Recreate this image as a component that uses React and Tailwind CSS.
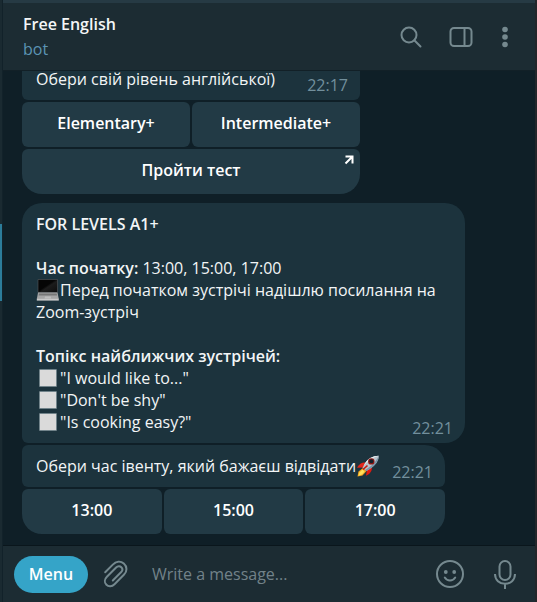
import React from "react";

function Laptop() {
  return (
    <svg viewBox="0 0 24 22" className="h-[22px] w-6 shrink-0" role="img" aria-label="laptop">
      <defs>
        <linearGradient id="screen" x1="0" y1="0" x2="1" y2="1">
          <stop offset="0.45" stopColor="#050505" />
          <stop offset="0.55" stopColor="#1c1c1c" />
          <stop offset="1" stopColor="#0c0c0c" />
        </linearGradient>
      </defs>
      <path d="M2 .5h19.500v13H2z" fill="url(#screen)" stroke="#55585a" strokeWidth=".6" />
      <path d="M2 13.500h19.500l1.300 6.500H.8z" fill="#a6a6a6" />
      <path d="M3 14.400h17.600l.5 2.200H2.600z" fill="#777777" />
      <path d="M9 17.600h5.800l.4 2H8.600z" fill="#bdbdbd" />
      <path d="M.8 19.800h22v1.800H.8z" fill="#c9c9c9" />
    </svg>
  );
}

function Rocket() {
  return (
    <svg viewBox="0 0 24 22" className="h-[22px] w-6 shrink-0" role="img" aria-label="rocket">
      <path d="M7 13 2.500 16.500 1.500 21.500l5-1L10.500 16z" fill="#f6a51f" />
      <path d="M6.500 14.500 3.400 17.500l-1 3.300L6 19.600l2.600-3z" fill="#ffe05a" />
      <path d="M9.500 7.600C6 7.200 3.200 9 1 12.800l6.500-.3z" fill="#e2261c" />
      <path d="M15.800 12.200c.6 3.400-1.800 6.600-5.800 8.600l1-6z" fill="#e01a10" />
      <path d="M22.800.8C16.500 1 12.300 3.500 9 8.300L6.500 12.800l4 3.200 4.300-2.800C19.500 10 22.400 6.500 22.800.8z" fill="#b9c3cb" />
      <path d="M22.800.8C16.500 1 12.300 3.500 9 8.300l-1.300 2.400C12 5.500 17 2.500 22.800.8z" fill="#e9eef1" />
      <path d="M22.800.8c-.4 5.700-3.300 9.200-8 12.400L10.500 16l-1.400-1.100C14.500 12 19.600 7.500 22.800.8z" fill="#7b96a8" />
      <circle cx="15.300" cy="6.400" r="3.200" fill="#8f1712" />
      <circle cx="15.400" cy="6.200" r="2" fill="#14212b" />
      <path d="m11.500 10.500-4.500 4" stroke="#c41810" strokeWidth="1.600" />
    </svg>
  );
}

function WhiteSquare() {
  return (
    <span className="flex h-[22px] w-6 shrink-0 items-center justify-center">
      <span className="size-[18px] rounded-[1px] border border-[#71838a] bg-[#dadada]" />
    </span>
  );
}

function Time({ children }) {
  return <time className="-mr-0.5 -mb-1.5 ml-auto shrink-0 self-end text-[#728f9c]">{children}</time>;
}

function Key({ children, className = "rounded-md" }) {
  return (
    <button type="button" className={`relative flex h-[45px] items-center justify-center bg-[#223a45] pb-[3px] font-semibold text-white ${className}`}>
      {children}
    </button>
  );
}

const topics = ['"I would like to..."', '"Don\'t be shy"', '"Is cooking easy?"'];

function Header() {
  return (
    <header className="flex h-[71px] shrink-0 items-center justify-between border-t-3 border-b border-t-[#263a44] border-b-[#122027] bg-[#1c2c33] pr-[18px] pl-5">
      <div>
        <h1 className="leading-[25px] font-semibold text-[#f4f6f7]">Free English</h1>
        <p className="leading-[25px] text-[#5b94b4]">bot</p>
      </div>
      <div className="flex items-center gap-5 text-[#75898f]">
        <button type="button" aria-label="Search" className="mr-1.5">
          <svg viewBox="0 0 24 24" className="size-6" fill="none" stroke="currentColor" strokeWidth="2">
            <circle cx="10" cy="10" r="7.500" />
            <path d="m15.300 15.300 6.200 6.200" strokeLinecap="round" />
          </svg>
        </button>
        <button type="button" aria-label="Side panel">
          <svg viewBox="0 0 24 24" className="size-6" fill="none" stroke="currentColor" strokeWidth="2">
            <rect x="1.500" y="3" width="21" height="18" rx="3.500" />
            <path d="M15.500 3v18" />
          </svg>
        </button>
        <button type="button" aria-label="More">
          <svg viewBox="0 0 24 24" className="size-6" fill="currentColor">
            <circle cx="12" cy="4.500" r="2.800" />
            <circle cx="12" cy="12" r="2.800" />
            <circle cx="12" cy="19.500" r="2.800" />
          </svg>
        </button>
      </div>
    </header>
  );
}

function Composer() {
  return (
    <footer className="flex h-[57px] shrink-0 items-center border-t border-[#0a161c] bg-[#1c2c33] pr-4 pl-[11px] text-[#75898f]">
      <button type="button" className="h-[37px] w-[74px] rounded-full bg-[#35a4c8] font-semibold text-white">
        Menu
      </button>
      <button type="button" aria-label="Attach" className="ml-3.5">
        <svg viewBox="0 0 28 28" className="size-7" fill="none" stroke="currentColor" strokeWidth="2" strokeLinecap="round">
          <path d="M3.200 12.200 10.800 4.600C14 1.400 18.500 .8 21.800 3.500c3.500 3 3.500 7.800.3 11L12.500 24.200c-2.600 2.600-6 2.700-8.100.6-2.200-2.200-2-5.600.5-8.100l9.200-9.200c1.700-1.700 3.900-1.700 5.200-.3 1.400 1.400 1.300 3.500-.3 5.100l-8.200 8.200" />
        </svg>
      </button>
      <input
        type="text"
        aria-label="Message"
        placeholder="Write a message..."
        className="ml-[22px] min-w-0 flex-1 bg-transparent text-white outline-none placeholder:text-[#728289]"
      />
      <button type="button" aria-label="Emoji">
        <svg viewBox="0 0 28 28" className="size-7" fill="none" stroke="currentColor" strokeWidth="2">
          <circle cx="14" cy="14" r="13" />
          <circle cx="9.800" cy="12" r="1.900" fill="currentColor" stroke="none" />
          <circle cx="18.200" cy="12" r="1.900" fill="currentColor" stroke="none" />
          <path d="M8.800 17.500c2.500 4 7.900 4 10.400 0" strokeLinecap="round" />
        </svg>
      </button>
      <button type="button" aria-label="Voice message" className="ml-[27px]">
        <svg viewBox="0 0 28 30" className="h-[30px] w-7" fill="none" stroke="currentColor" strokeWidth="2">
          <rect x="8.500" y="2" width="11" height="19" rx="5.500" />
          <path d="M4 15c0 6 4.500 9.800 10 9.800S24 21 24 15M14 24.800V30" />
        </svg>
      </button>
    </footer>
  );
}

export default function App() {
  return (
    <div className="flex h-screen bg-[#0f1f27] font-['Open_Sans',sans-serif] text-base leading-[22px] text-[#f2f5f6]">
      <div className="w-0.5 shrink-0 bg-[#1a2a31] pt-56">
        <div className="h-[77px] bg-[#2c7c9a]" />
      </div>
      <div className="flex min-w-0 flex-1 flex-col border-l border-[#12222a]">
        <Header />
        <main className="flex min-h-0 flex-1 flex-col items-start justify-end overflow-hidden pr-3 pb-[11px] pl-[19px]">
          <section className="mb-[9px] flex w-[338px] shrink-0 flex-col gap-0.5">
            <div className="flex rounded-md bg-[#1c333d] px-3.5 py-2.5">
              <p>Обери свій рівень англійської)</p>
              <Time>22:17</Time>
            </div>
            <div className="grid grid-cols-2 gap-0.5">
              <Key>Elementary+</Key>
              <Key>Intermediate+</Key>
            </div>
            <Key className="rounded-t-md rounded-b-[20px]">
              Пройти тест
              <svg viewBox="0 0 10 10" className="absolute top-1.5 right-1.5 size-2.5" fill="none" stroke="currentColor" strokeWidth="2">
                <path d="M1.500 1.500H8.500V8.500M8.500 1.500 1.500 8.500" />
              </svg>
            </Key>
          </section>

          <section className="mb-0.5 flex w-full max-w-[443px] shrink-0 flex-col rounded-[20px] rounded-bl-md bg-[#1c333d] px-3.5 py-2.5">
            <p className="mb-[22px] font-semibold">FOR LEVELS A1+</p>
            <p>
              <b className="font-semibold">Час початку:</b> 13:00, 15:00, 17:00
            </p>
            <p className="mb-[22px]">
              <span className="float-left">
                <Laptop />
              </span>
              Перед початком зустрічі надішлю посилання на <span className="inline-block">Zoom-зустріч</span>
            </p>
            <p className="font-semibold">Топікс найближчих зустрічей:</p>
            <div className="flex">
              <ul>
                {topics.map((topic) => (
                  <li key={topic} className="flex">
                    <WhiteSquare />
                    {topic}
                  </li>
                ))}
              </ul>
              <Time>22:21</Time>
            </div>
          </section>

          <section className="flex w-[423px] max-w-full shrink-0 flex-col gap-0.5">
            <div className="flex rounded-md rounded-tr-[20px] bg-[#1c333d] px-3.5 py-2.5">
              <p className="flex">
                Обери час івенту, який бажаєш відвідати
                <Rocket />
              </p>
              <Time>22:21</Time>
            </div>
            <div className="grid grid-cols-3 gap-0.5">
              <Key className="rounded-md rounded-bl-[20px]">13:00</Key>
              <Key>15:00</Key>
              <Key className="rounded-md rounded-br-[20px]">17:00</Key>
            </div>
          </section>
        </main>
        <Composer />
      </div>
      <div className="w-0.5 shrink-0 bg-[#23262a]" />
    </div>
  );
}
